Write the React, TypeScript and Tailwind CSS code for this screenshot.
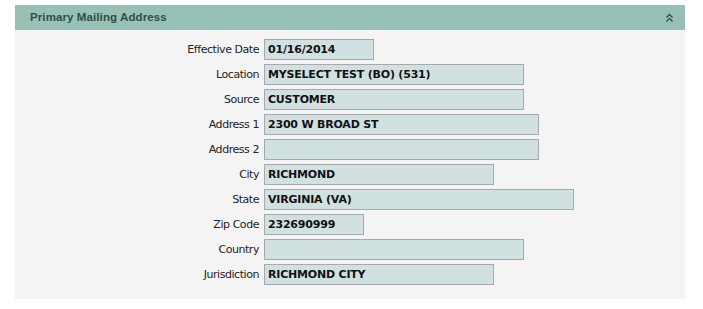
import React from "react";

interface Field {
  label: string;
  value: string;
  width: string;
}

const fields: Field[] = [
  { label: "Effective Date", value: "01/16/2014", width: "w-[110px]" },
  { label: "Location", value: "MYSELECT TEST (BO) (531)", width: "w-[260px]" },
  { label: "Source", value: "CUSTOMER", width: "w-[260px]" },
  { label: "Address 1", value: "2300 W BROAD ST", width: "w-[275px]" },
  { label: "Address 2", value: "", width: "w-[275px]" },
  { label: "City", value: "RICHMOND", width: "w-[230px]" },
  { label: "State", value: "VIRGINIA (VA)", width: "w-[310px]" },
  { label: "Zip Code", value: "232690999", width: "w-[100px]" },
  { label: "Country", value: "", width: "w-[260px]" },
  { label: "Jurisdiction", value: "RICHMOND CITY", width: "w-[230px]" },
];

export default function App() {
  return (
    <div className="w-[703px] h-[309px] bg-white pt-[5px] pl-[15px] font-['DejaVu_Sans',sans-serif]">
      <div className="w-[670px]">
        {/* Header */}
        <div className="h-[25px] bg-[#97c1b6] flex items-center justify-between pl-[15px] pr-[12px]">
          <span className="text-[11.5px] font-bold text-[#2e4f48] font-['Liberation_Sans',sans-serif] tracking-[0.1px] pt-[1px]">
            Primary Mailing Address
          </span>
          <svg width="7" height="10" viewBox="0 0 7 10" className="mt-[1px]">
            <path d="M0.5 4.5 L3.5 1.5 L6.5 4.5" fill="none" stroke="#2e4f48" strokeWidth="1.4" />
            <path d="M0.5 8.5 L3.5 5.5 L6.5 8.5" fill="none" stroke="#2e4f48" strokeWidth="1.4" />
          </svg>
        </div>

        {/* Body */}
        <div className="bg-[#f4f4f4] pt-[9px] pb-[14px] flex flex-col gap-[4px]">
          {fields.map((f) => (
            <div key={f.label} className="flex items-center">
              <label className="w-[249px] pr-[5px] pt-[2px] text-right text-[11px] text-[#222] tracking-[-0.45px]">
                {f.label}
              </label>
              <div
                className={`${f.width} h-[21px] bg-[#d1e0e0] border border-[#a7a9ac] flex items-center px-[3px] pt-[2px] text-[11px] font-bold text-[#111] tracking-[-0.2px] whitespace-nowrap`}
              >
                {f.value}
              </div>
            </div>
          ))}
        </div>
      </div>
    </div>
  );
}
